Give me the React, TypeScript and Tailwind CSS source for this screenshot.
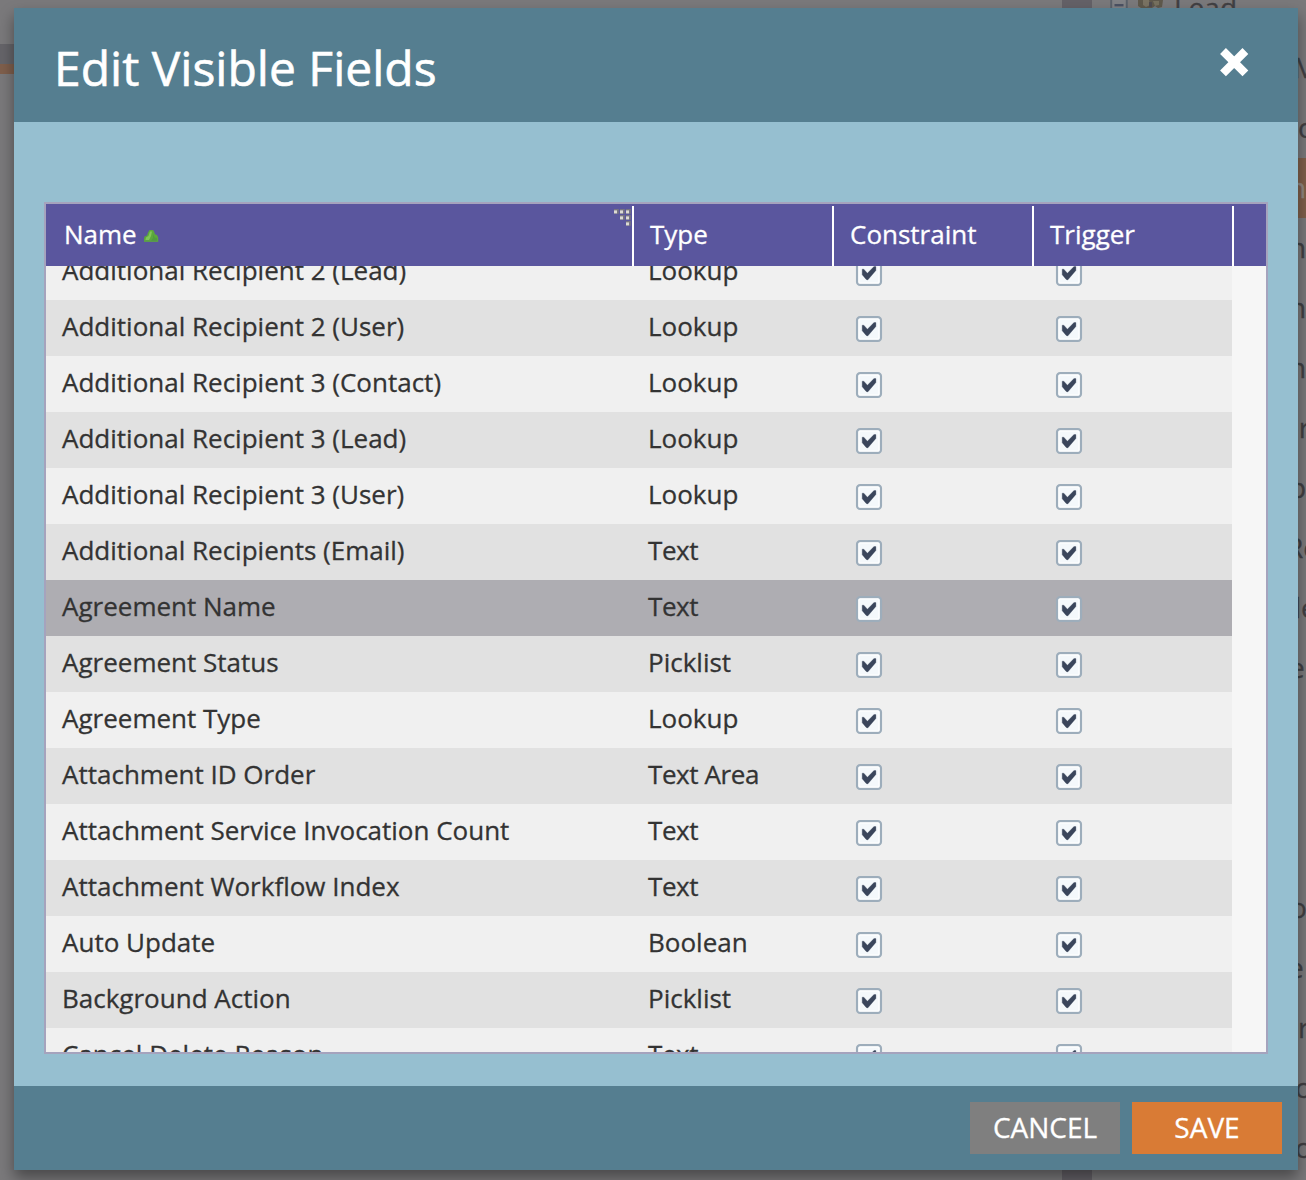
import React from "react";

type Row = { name: string; type: string; selected?: boolean };

const rows: Row[] = [
  { name: "Additional Recipient 2 (Lead)", type: "Lookup" },
  { name: "Additional Recipient 2 (User)", type: "Lookup" },
  { name: "Additional Recipient 3 (Contact)", type: "Lookup" },
  { name: "Additional Recipient 3 (Lead)", type: "Lookup" },
  { name: "Additional Recipient 3 (User)", type: "Lookup" },
  { name: "Additional Recipients (Email)", type: "Text" },
  { name: "Agreement Name", type: "Text", selected: true },
  { name: "Agreement Status", type: "Picklist" },
  { name: "Agreement Type", type: "Lookup" },
  { name: "Attachment ID Order", type: "Text Area" },
  { name: "Attachment Service Invocation Count", type: "Text" },
  { name: "Attachment Workflow Index", type: "Text" },
  { name: "Auto Update", type: "Boolean" },
  { name: "Background Action", type: "Picklist" },
  { name: "Cancel Delete Reason", type: "Text" },
];

type Peek = { text: string; shift: string; active?: boolean };

const treeItems: Peek[] = [
  { text: "M", shift: "-ml-[4px]" },
  { text: "c", shift: "ml-[1px]" },
  { text: "n", shift: "-ml-[8px]", active: true },
  { text: "n", shift: "-ml-[8px]" },
  { text: "n", shift: "-ml-[8px]" },
  { text: "n", shift: "-ml-[8px]" },
  { text: "er", shift: "-ml-[14px]" },
  { text: "p", shift: "-ml-[8px]" },
  { text: "Re", shift: "-ml-[11px]" },
  { text: "le", shift: "-ml-[3px]" },
  { text: "e", shift: "-ml-[8px]" },
  { text: "", shift: "" },
  { text: "", shift: "" },
  { text: "", shift: "" },
  { text: "o", shift: "-ml-[7px]" },
  { text: "e", shift: "-ml-[9px]" },
  { text: "r", shift: "ml-[1px]" },
  { text: "c", shift: "-ml-[2px]" },
  { text: "c", shift: "-ml-[2px]" },
];

function Check() {
  return (
    <svg width="28" height="28" viewBox="0 0 28 28" className="block">
      <rect x="2.1" y="2.1" width="23.8" height="23.8" rx="3" fill="#f4f8fb" stroke="#9dadbb" strokeWidth="2.3" />
      <rect x="4" y="4" width="20" height="20" rx="1" fill="none" stroke="#ffffff" strokeWidth="1.2" />
      <path
        d="M7.2 10.2 L8.8 10.2 L12.4 14.2 L19 7.6 L20.9 7.6 L20.9 11.4 L13.6 20 L12.6 21 L11.2 20.4 L7.2 15.8 Z"
        fill="#3a455b"
        stroke="#3a455b"
        strokeOpacity="0.4"
        strokeWidth="0.8"
        strokeLinejoin="round"
      />
    </svg>
  );
}

function SortIcon() {
  return (
    <svg width="16" height="14" viewBox="0 0 16 14" className="block">
      <path d="M6.5 1h3.5l1 1.2 1 3 2 .8 1.2 2.5V13H1V9.5L1.5 7.5 4 6.5 5 3.5z" fill="#5ca83c" />
      <path d="M7 2.5h2l-1 4.5-2 4H2.5l.5-2.5 2.5-1.5z" fill="#8fd062" fillOpacity="0.75" />
      <path d="M10 5l1.5 3.5 2.5.5v3H8l2-3z" fill="#4a9440" fillOpacity="0.6" />
      <path d="M1 11.5h14V13H1z" fill="#5a8f5c" fillOpacity="0.6" />
    </svg>
  );
}

function GripIcon() {
  const dots = [
    [0, 0],
    [6, 0],
    [12, 0],
    [6, 6],
    [12, 6],
    [12, 12],
  ];
  return (
    <svg width="18" height="18" viewBox="0 0 18 18" className="block">
      {dots.map(([x, y]) => (
        <g key={`${x}-${y}`}>
          <rect x={x} y={y} width="4.8" height="4.8" fill="#777482" />
          <rect x={x} y={y + 1.4} width="3" height="3" fill="#dddbd4" />
        </g>
      ))}
    </svg>
  );
}

function Backdrop() {
  return (
    <div className="absolute inset-0 flex bg-[#7a797b]">
      <div className="flex w-[14px] flex-col">
        <div className="mt-11 h-5 bg-[#656469]" />
        <div className="h-[10px] bg-[#7f5f4c]" />
      </div>
      <div className="ml-[1048px] w-[30px] bg-[#646167]" />
      <div className="relative flex h-[38px] w-[206px] shrink-0 pl-[18px]">
        <svg width="18" height="12" viewBox="0 0 18 12" className="shrink-0">
          <rect width="18" height="12" fill="#818286" />
          <path d="M1.2 0v12M16.8 0v12" stroke="#5b616a" strokeWidth="2" />
          <rect x="4.5" y="4" width="9" height="2.4" fill="#4b5162" />
        </svg>
        <svg width="26" height="12" viewBox="0 0 26 12" className="ml-2.5 shrink-0">
          <path d="M0 0h25l-1 7-4 1-3-2-3 2H3L0 6z" fill="#5f594c" />
          <path d="M5 0h6l1 5-4 2-3-2z" fill="#7a7363" />
          <path d="M15 1h6v4l-4 1z" fill="#77715f" />
          <path d="M11 2h3v5h-3z" fill="#504c50" />
        </svg>
        <span className="-mt-[11px] ml-2.5 text-[28px] leading-[36px] text-[#414043]">Lead</span>
      </div>
      <div className="-ml-px flex flex-1 flex-col overflow-hidden pt-[38px]">
        {treeItems.map((item, i) => (
          <div
            key={i}
            className={
              item.active
                ? "flex h-[60px] shrink-0 items-center bg-[#80604b] text-[#918881]"
                : "flex h-[60px] shrink-0 items-center text-[#414043]"
            }
          >
            <span className={`-mt-0.5 text-[28px] ${item.shift}`}>{item.text}</span>
          </div>
        ))}
      </div>
    </div>
  );
}

const columns = "grid grid-cols-[586px_200px_200px_200px]";
const headCell = "flex w-[200px] items-center border-r-2 border-white pb-1 pl-4";

export default function App() {
  return (
    <div className="relative flex h-[1180px] w-[1306px] overflow-hidden pt-2 pl-[14px] font-['Open_Sans',sans-serif] [-webkit-text-stroke:0.3px]">
      <Backdrop />
      <section className="relative flex h-[1162px] w-[1284px] flex-col bg-[#96bfd0] shadow-[0_8px_14px_rgba(0,0,0,0.4)]">
        <header className="flex h-[114px] shrink-0 items-center justify-between bg-[#557e90] pr-12 pl-10">
          <h1 className="pt-1.5 text-[48px] leading-none text-white [-webkit-text-stroke:0.6px]">Edit Visible Fields</h1>
          <button aria-label="Close" className="-mt-1.5">
            <svg width="32" height="32" viewBox="0 0 32 32">
              <path d="M5 5 L27.4 27.4 M27.4 5 L5 27.4" stroke="#fff" strokeWidth="8.2" />
            </svg>
          </button>
        </header>

        <div className="flex-1 px-[30px] pt-20">
          <div className="flex h-[852px] flex-col border-2 border-[#a5a3bd] bg-[#f6f6f6]">
            <div className="flex h-[62px] shrink-0 bg-[#5a569e] pt-0.5 text-[26px] text-white">
              <div className="flex w-[588px] items-center border-r-2 border-white pl-[18px]">
                <span className="pb-1">Name</span>
                <span className="ml-1.5"><SortIcon /></span>
                <span className="ml-auto self-start pt-[3px]"><GripIcon /></span>
              </div>
              <div className={headCell}>Type</div>
              <div className={headCell}>Constraint</div>
              <div className={headCell}>Trigger</div>
            </div>
            <div className="min-h-0 flex-1 overflow-hidden">
              <div className="-mt-[22px] w-[1186px]">
                {rows.map((row, i) => (
                  <div
                    key={row.name}
                    className={`${columns} h-14 items-center text-[26px] text-[#333333] ${
                      row.selected ? "bg-[#aeadb2]" : i % 2 ? "bg-[#e1e1e1]" : "bg-[#f0f0f0]"
                    }`}
                  >
                    <span className="-mt-1 pl-4">{row.name}</span>
                    <span className={`-mt-1 pl-4 ${row.type.startsWith("Text") ? "tracking-[-0.4px]" : ""}`}>
                      {row.type}
                    </span>
                    <span className="mt-0.5 pl-[23px]"><Check /></span>
                    <span className="mt-0.5 pl-[23px]"><Check /></span>
                  </div>
                ))}
              </div>
            </div>
          </div>
        </div>

        <footer className="flex h-[84px] shrink-0 items-center justify-end gap-3 bg-[#557e90] pr-4 text-[28px] text-white">
          <button className="h-[52px] w-[150px] bg-[#7f7f7f] pb-0.5">CANCEL</button>
          <button className="h-[52px] w-[150px] bg-[#d97b35] pb-0.5">SAVE</button>
        </footer>
      </section>
    </div>
  );
}
